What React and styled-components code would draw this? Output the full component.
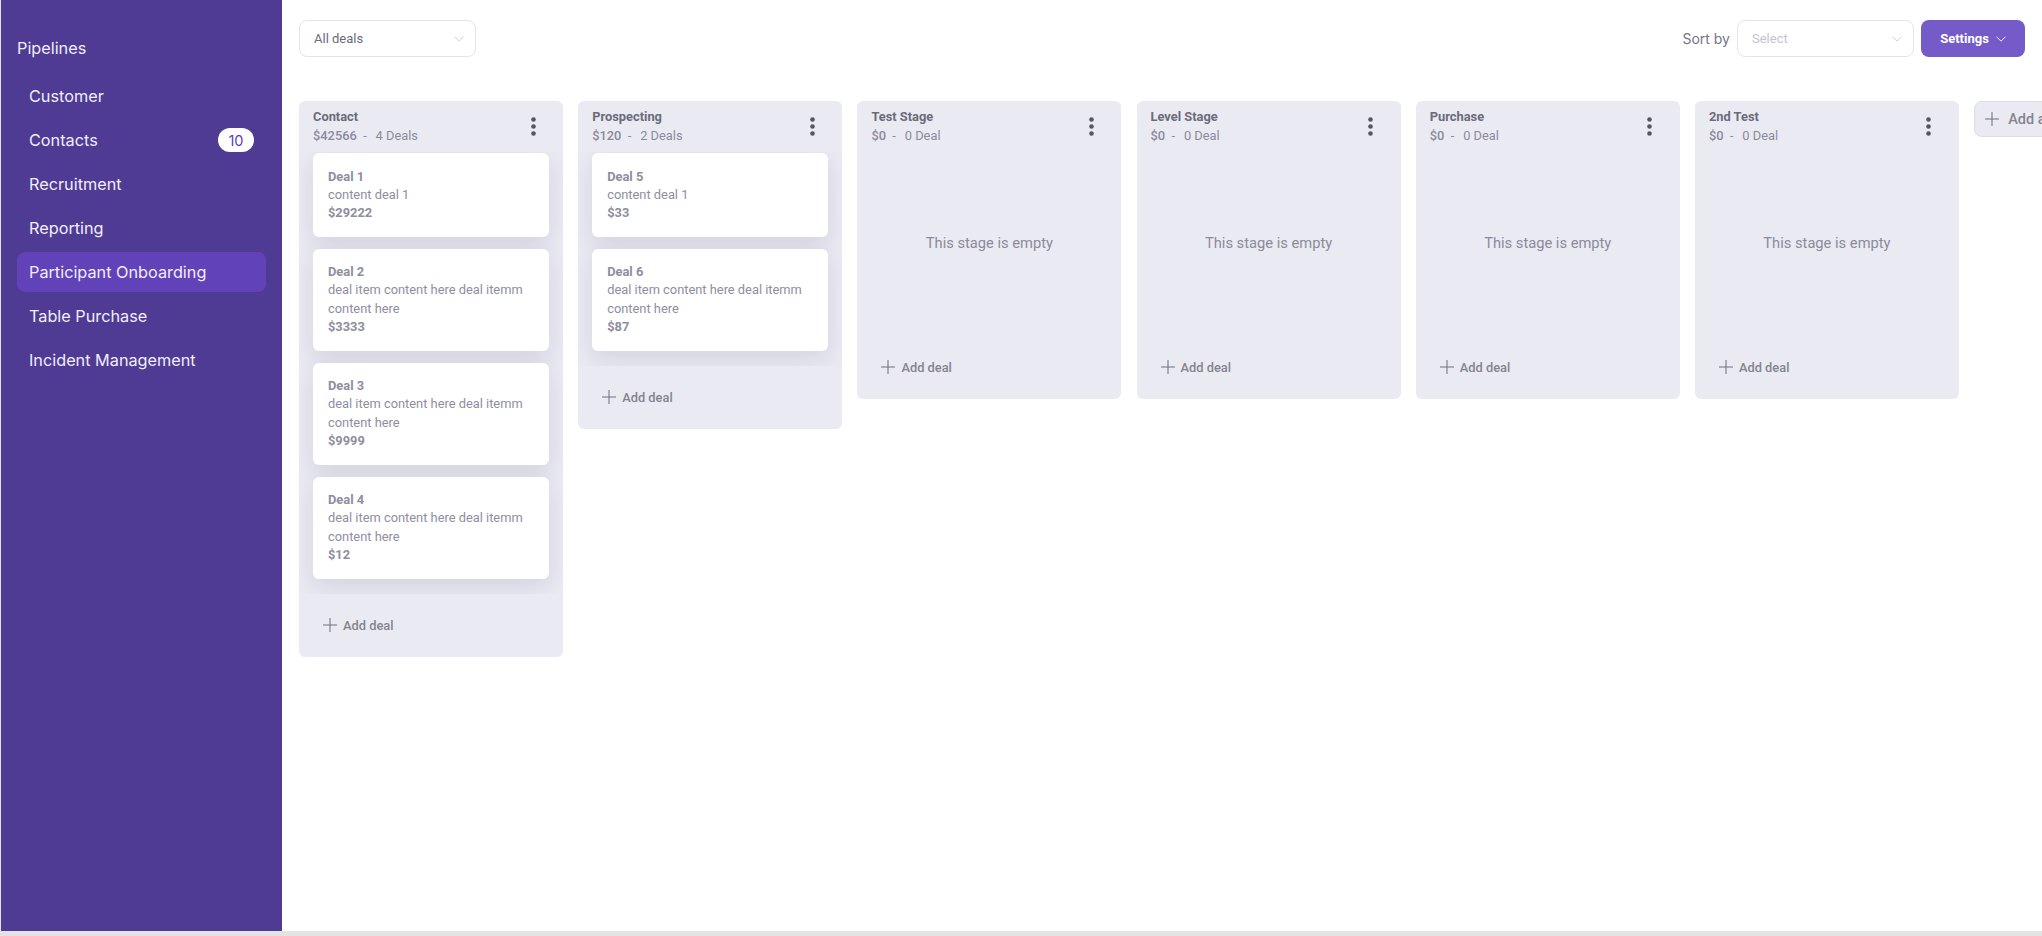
import React from 'react';
import styled, { createGlobalStyle } from 'styled-components';

const GlobalStyle = createGlobalStyle`
  html, body {
    margin: 0;
    padding: 0;
    height: 100%;
    overflow: hidden;
  }
  * {
    box-sizing: border-box;
  }
`;

const Page = styled.div`
  display: flex;
  width: 100vw;
  height: 100vh;
  padding: 0 0 5px 1px;
  background-color: #e3e3e3;
  overflow: hidden;
`;

const Sidebar = styled.aside`
  flex: 0 0 281px;
  padding: 37px 16px 0;
  background-color: #4f3a94;
  font-family: Inter, "Noto Sans", sans-serif;
  color: #f1eefa;
`;

const SidebarTitle = styled.div`
  font-size: 16.25px;
  line-height: 22px;
  margin-bottom: 17.4px;
`;

const NavList = styled.nav`
  display: flex;
  flex-direction: column;
  gap: 4px;
`;

const NavItem = styled.div`
  display: flex;
  align-items: center;
  justify-content: space-between;
  height: 40px;
  padding: 0 12px;
  border-radius: 8px;
  font-size: 16.25px;
  background-color: ${(p) => (p.$active ? '#6242b8' : 'transparent')};
`;

const Badge = styled.span`
  display: flex;
  align-items: center;
  justify-content: center;
  width: 36px;
  height: 24px;
  border-radius: 12px;
  background-color: #fff;
  color: #5b3cc4;
  font-size: 14.5px;
`;

const Main = styled.main`
  flex: 1;
  min-width: 0;
  background-color: #fff;
  font-family: Roboto, "Liberation Sans", sans-serif;
`;

const Toolbar = styled.div`
  display: flex;
  justify-content: space-between;
  height: 101px;
  padding: 20px 17px 0;
`;

const ToolbarRight = styled.div`
  display: flex;
  align-items: flex-start;
  gap: 7px;
`;

const SortLabel = styled.span`
  font-family: Inter, sans-serif;
  font-size: 14px;
  line-height: 37px;
  color: #74748a;
`;

const SelectBox = styled.div`
  display: flex;
  align-items: center;
  justify-content: space-between;
  width: ${(p) => p.$width}px;
  height: 37px;
  padding: 0 11px 0 14px;
  border: 1px solid #e4e4ec;
  border-radius: 8px;
  background-color: #fff;
  font-size: 13px;
  color: ${(p) => (p.$placeholder ? '#c4c4d0' : '#6b6b78')};
`;

const SettingsButton = styled.button`
  display: flex;
  align-items: center;
  justify-content: center;
  gap: 7px;
  width: 104px;
  height: 37px;
  border: 0;
  border-radius: 8px;
  background-color: #745bc8;
  color: #fff;
  font-family: Roboto, sans-serif;
  font-size: 13px;
  font-weight: 700;
`;

const Board = styled.div`
  display: flex;
  align-items: flex-start;
  gap: 15.2px;
  padding: 0 17px;
  overflow: hidden;
`;

const Column = styled.section`
  flex: 0 0 264px;
  border-radius: 6px;
  background-color: #eaeaf3;
`;

const ColumnHeader = styled.header`
  display: flex;
  align-items: center;
  justify-content: space-between;
  height: 51px;
  padding: 0 27.5px 0 14px;
`;

const ColumnTitle = styled.div`
  font-size: 12.85px;
  font-weight: 700;
  line-height: 18.3px;
  color: #6b6b7a;
`;

const ColumnMeta = styled.div`
  font-size: 12.85px;
  line-height: 18.3px;
  color: #8a8a9a;
  white-space: pre;

  b {
    font-weight: 500;
  }
`;

const DealCount = styled.span`
  margin-left: 2.5px;
`;

const CardList = styled.div`
  display: flex;
  flex-direction: column;
  gap: 11.8px;
  padding: 1px 14.5px 15px 14px;
  overflow: hidden;
`;

const Card = styled.article`
  padding: 14.5px 15px;
  border-radius: 6px;
  background-color: #fff;
  box-shadow: 0 8px 24px rgba(30, 30, 60, 0.11);
  font-size: 12.85px;
  line-height: 18.3px;
  color: #8e8e9e;
`;

const CardTitle = styled.div`
  font-weight: 700;
`;

const CardAmount = styled.div`
  font-weight: 700;
`;

const EmptyStage = styled.div`
  display: flex;
  align-items: center;
  justify-content: center;
  height: 183.5px;
  padding-bottom: 1.5px;
  font-size: 14.7px;
  color: #8a8a9a;
`;

const AddDeal = styled.div`
  display: flex;
  align-items: center;
  gap: 6px;
  height: 63px;
  padding: 0 24px;
  font-size: 12.85px;
  font-weight: 500;
  color: #84848f;
`;

const AddStage = styled.div`
  flex: 0 0 auto;
  display: flex;
  align-items: center;
  gap: 9px;
  width: 180px;
  height: 36px;
  padding: 0 10px;
  border: 1px solid #dcdce6;
  border-radius: 8px;
  background-color: #eaeaf3;
  font-size: 14.5px;
  font-weight: 500;
  color: #84848f;
`;

const ChevronDown = ({ color }) => (
  <svg width="10" height="6" viewBox="0 0 10 6" fill="none">
    <polyline points="0.5,0.7 5,5.2 9.5,0.7" stroke={color} strokeWidth="0.9" />
  </svg>
);

const PlusIcon = () => (
  <svg width="14" height="14" viewBox="0 0 14 14" fill="none">
    <path d="M7 0V14M0 7H14" stroke="#6f6f7c" strokeWidth="1" />
  </svg>
);

const KebabIcon = () => (
  <svg width="5" height="19" viewBox="0 0 5 19" fill="#56565f">
    <circle cx="2.5" cy="2.5" r="2.3" />
    <circle cx="2.5" cy="9.5" r="2.3" />
    <circle cx="2.5" cy="16.5" r="2.3" />
  </svg>
);

const navItems = ['Customer', 'Contacts', 'Recruitment', 'Reporting', 'Participant Onboarding', 'Table Purchase', 'Incident Management'];

const longText = 'deal item content here deal itemm content here';

const stages = [
  {
    name: 'Contact',
    total: '$42566',
    count: '4 Deals',
    deals: [
      { title: 'Deal 1', text: 'content deal 1', amount: '$29222' },
      { title: 'Deal 2', text: longText, amount: '$3333' },
      { title: 'Deal 3', text: longText, amount: '$9999' },
      { title: 'Deal 4', text: longText, amount: '$12' },
    ],
  },
  {
    name: 'Prospecting',
    total: '$120',
    count: '2 Deals',
    deals: [
      { title: 'Deal 5', text: 'content deal 1', amount: '$33' },
      { title: 'Deal 6', text: longText, amount: '$87' },
    ],
  },
  { name: 'Test Stage', total: '$0', count: '0 Deal', deals: [] },
  { name: 'Level Stage', total: '$0', count: '0 Deal', deals: [] },
  { name: 'Purchase', total: '$0', count: '0 Deal', deals: [] },
  { name: '2nd Test', total: '$0', count: '0 Deal', deals: [] },
];

const App = () => (
  <Page>
    <GlobalStyle />
    <Sidebar>
      <SidebarTitle>Pipelines</SidebarTitle>
      <NavList>
        {navItems.map((item) => (
          <NavItem key={item} $active={item === 'Participant Onboarding'}>
            {item}
            {item === 'Contacts' && <Badge>10</Badge>}
          </NavItem>
        ))}
      </NavList>
    </Sidebar>
    <Main>
      <Toolbar>
        <SelectBox $width={177}>
          All deals
          <ChevronDown color="#c9c9d4" />
        </SelectBox>
        <ToolbarRight>
          <SortLabel>Sort by</SortLabel>
          <SelectBox $width={177} $placeholder>
            Select
            <ChevronDown color="#c9c9d4" />
          </SelectBox>
          <SettingsButton>
            Settings
            <ChevronDown color="#fff" />
          </SettingsButton>
        </ToolbarRight>
      </Toolbar>
      <Board>
        {stages.map((stage) => (
          <Column key={stage.name}>
            <ColumnHeader>
              <div>
                <ColumnTitle>{stage.name}</ColumnTitle>
                <ColumnMeta>
                  <b>{stage.total}</b>{'  -  '}<DealCount>{stage.count}</DealCount>
                </ColumnMeta>
              </div>
              <KebabIcon />
            </ColumnHeader>
            {stage.deals.length > 0 ? (
              <CardList>
                {stage.deals.map((deal) => (
                  <Card key={deal.title}>
                    <CardTitle>{deal.title}</CardTitle>
                    <div>{deal.text}</div>
                    <CardAmount>{deal.amount}</CardAmount>
                  </Card>
                ))}
              </CardList>
            ) : (
              <EmptyStage>This stage is empty</EmptyStage>
            )}
            <AddDeal>
              <PlusIcon />
              Add deal
            </AddDeal>
          </Column>
        ))}
        <AddStage>
          <PlusIcon />
          Add a stage
        </AddStage>
      </Board>
    </Main>
  </Page>
);

export default App;
